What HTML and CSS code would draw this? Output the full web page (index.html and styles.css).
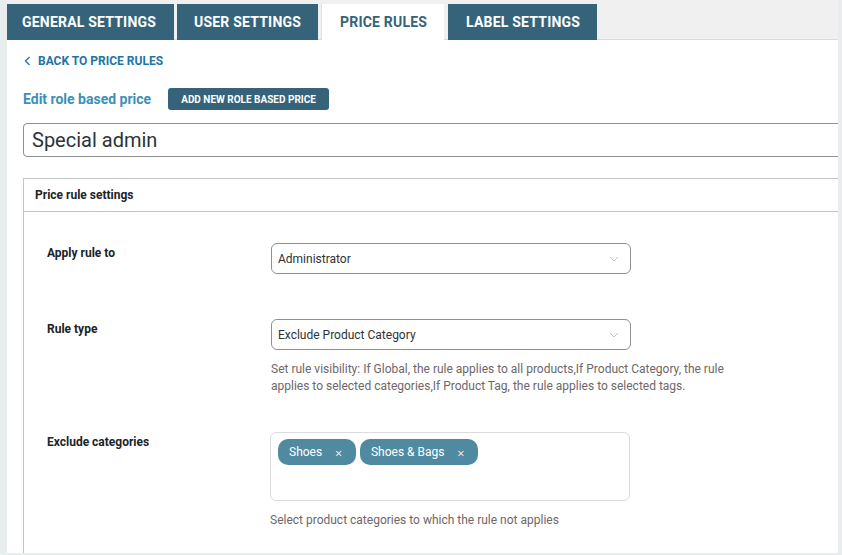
FILE: index.html
```html
<!DOCTYPE html>
<html lang="en">
<head>
<meta charset="utf-8">
<title>Price rules</title>
<link rel="stylesheet" href="styles.css">
</head>
<body>
<div class="wrap">
  <nav class="tabs">
    <a class="tab tab-general">GENERAL SETTINGS</a>
    <a class="tab tab-user">USER SETTINGS</a>
    <a class="tab active">PRICE RULES</a>
    <a class="tab tab-label">LABEL SETTINGS</a>
  </nav>
  <main class="panel">
    <div class="content">
      <a class="back">
        <svg class="back-icon" width="7" height="10" viewBox="0 0 7 10"><path d="M5.5 1 L1.5 5 L5.5 9" fill="none" stroke="currentColor" stroke-width="1.3"/></svg>
        BACK TO PRICE RULES
      </a>
      <div class="title-row">
        <h2 class="title">Edit role based price</h2>
        <button class="btn">ADD NEW ROLE BASED PRICE</button>
      </div>
      <input class="name-input" type="text" value="Special admin">
      <section class="box">
        <header class="box-head">Price rule settings</header>
        <div class="box-body">
          <div class="row">
            <div class="label">Apply rule to</div>
            <div class="field">
              <div class="select">
                <span>Administrator</span>
                <svg class="chev" width="10" height="6" viewBox="0 0 10 6"><path d="M1 1 L5 5 L9 1" fill="none" stroke="currentColor" stroke-width="1"/></svg>
              </div>
            </div>
          </div>
          <div class="row">
            <div class="label">Rule type</div>
            <div class="field">
              <div class="select">
                <span>Exclude Product Category</span>
                <svg class="chev" width="10" height="6" viewBox="0 0 10 6"><path d="M1 1 L5 5 L9 1" fill="none" stroke="currentColor" stroke-width="1"/></svg>
              </div>
              <p class="help help-tight">Set rule visibility: If Global, the rule applies to all products,If Product Category, the rule applies to selected categories,If Product Tag, the rule applies to selected tags.</p>
            </div>
          </div>
          <div class="row">
            <div class="label">Exclude categories</div>
            <div class="field">
              <div class="multi">
                <span class="tag">Shoes<span class="x">×</span></span>
                <span class="tag">Shoes &amp; Bags<span class="x">×</span></span>
              </div>
              <p class="help">Select product categories to which the rule not applies</p>
            </div>
          </div>
        </div>
      </section>
    </div>
  </main>
</div>
</body>
</html>
```
FILE: styles.css
```css
* { box-sizing: border-box; }
html, body { margin: 0; padding: 0; }
body {
  background: #e8eeee;
  font-family: Roboto, "Liberation Sans", sans-serif;
  color: #1d2327;
  height: 555px;
  overflow: hidden;
}
.wrap {
  margin: 0 4px 0 7px;
  background: #f0f0f0;
  padding-top: 4px;
}
.tabs {
  display: flex;
  gap: 3px;
  height: 36px;
  border-bottom: 1px solid #dcdcde;
}
.tab {
  display: flex;
  align-items: center;
  height: 36px;
  padding: 0 18px 1px;
  background: #35647a;
  color: #fff;
  font-weight: 700;
  font-size: 14px;
  letter-spacing: 0.2px;
  text-decoration: none;
}
.tab-general { padding-left: 15px; padding-right: 18px; }
.tab-user { padding-left: 17px; padding-right: 17px; }
.tab.active {
  background: #fff;
  color: #35647a;
  border-left: 1px solid #e2e2e2;
  padding: 0 17px 1px 18px;
}
.tab-label { margin-left: 1px; padding-left: 18px; padding-right: 17px; }
.panel {
  background: #fff;
  height: 513px;
  overflow: hidden;
}
.content {
  padding: 14px 0 0 16px;
  margin-right: -30px;
}
.back {
  display: flex;
  align-items: center;
  gap: 7px;
  font-size: 12px;
  font-weight: 700;
  color: #1f74a6;
  padding-left: 1px;
  height: 14px;
}
.back-icon { display: block; }
.title-row {
  display: flex;
  align-items: center;
  margin-top: 20px;
  height: 22px;
}
.title {
  margin: 0;
  font-size: 14px;
  font-weight: 700;
  color: #3d8fb8;
}
.btn {
  margin-left: 17px;
  height: 22px;
  padding: 0 13px;
  border: 0;
  border-radius: 3px;
  background: #35647a;
  color: #fff;
  font-family: Roboto, "Liberation Sans", sans-serif;
  font-size: 10px;
  font-weight: 700;
}
.name-input {
  display: block;
  width: 100%;
  margin-top: 13px;
  height: 34px;
  padding: 0 8px;
  border: 1px solid #8c8f94;
  border-radius: 4px;
  font-family: Roboto, "Liberation Sans", sans-serif;
  font-size: 20px;
  color: #2c3338;
}
.box {
  margin-top: 21px;
  border: 1px solid #c3c4c7;
  min-height: 400px;
}
.box-head {
  height: 33px;
  padding: 0 11px;
  display: flex;
  align-items: center;
  font-size: 12px;
  font-weight: 700;
  border-bottom: 1px solid #c3c4c7;
  color: #1d2327;
}
.box-body {
  padding: 8px 0 0 23px;
}
.row {
  display: flex;
  padding: 23px 0 22px;
}
.label {
  width: 224px;
  flex: none;
  padding-top: 2px;
  font-size: 12px;
  line-height: 16px;
  font-weight: 700;
  color: #1d2327;
}
.field { width: 480px; }
.select {
  width: 360px;
  height: 31px;
  border: 1px solid #8c8f94;
  border-radius: 6px;
  display: flex;
  align-items: center;
  justify-content: space-between;
  padding: 0 11px 0 6px;
  font-size: 12px;
  color: #2c3338;
}
.chev { color: #c4c4c4; display: block; }
.help {
  margin: 11px 0 0;
  font-size: 12px;
  line-height: 17px;
  color: #6e6769;
  max-width: 470px;
}
.help-tight { margin-bottom: -8px; }
.multi {
  width: 360px;
  height: 69px;
  margin-left: -1px;
  border: 1px solid #dcdcde;
  border-radius: 6px;
  padding: 6px 7px;
  display: flex;
  align-items: flex-start;
  gap: 4px;
}
.tag {
  display: inline-flex;
  align-items: center;
  height: 26px;
  padding: 0 14px 0 11px;
  border-radius: 10px;
  background: #4f8aa1;
  color: #fff;
  font-size: 12px;
}
.tag .x {
  margin-left: 13px;
  font-size: 13px;
  font-weight: 300;
}
.multi + .help { margin-top: 11px; margin-left: -1px; }
```
